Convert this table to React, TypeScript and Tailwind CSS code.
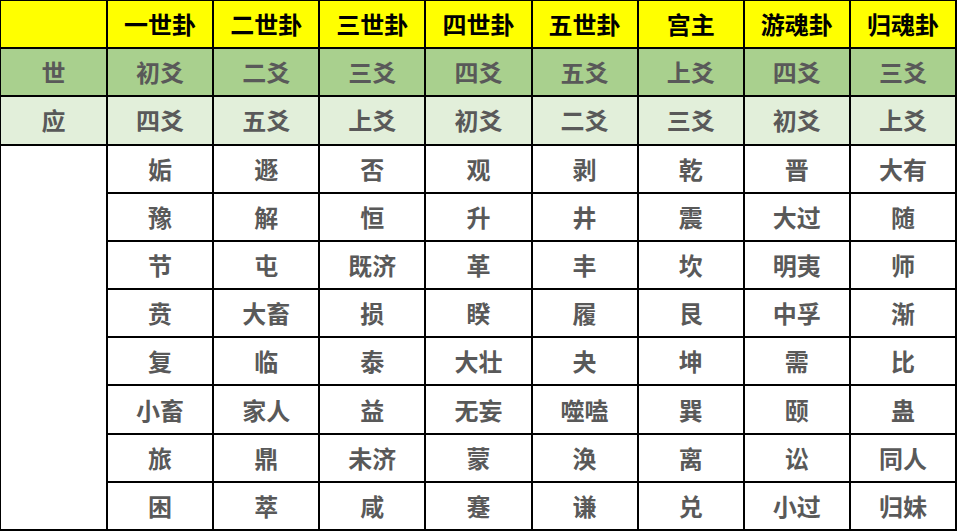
const headers = ["一世卦", "二世卦", "三世卦", "四世卦", "五世卦", "宫主", "游魂卦", "归魂卦"];
const shi = ["初爻", "二爻", "三爻", "四爻", "五爻", "上爻", "四爻", "三爻"];
const ying = ["四爻", "五爻", "上爻", "初爻", "二爻", "三爻", "初爻", "上爻"];
const body = [
  ["姤", "遯", "否", "观", "剥", "乾", "晋", "大有"],
  ["豫", "解", "恒", "升", "井", "震", "大过", "随"],
  ["节", "屯", "既济", "革", "丰", "坎", "明夷", "师"],
  ["贲", "大畜", "损", "睽", "履", "艮", "中孚", "渐"],
  ["复", "临", "泰", "大壮", "夬", "坤", "需", "比"],
  ["小畜", "家人", "益", "无妄", "噬嗑", "巽", "颐", "蛊"],
  ["旅", "鼎", "未济", "蒙", "涣", "离", "讼", "同人"],
  ["困", "萃", "咸", "蹇", "谦", "兑", "小过", "归妹"],
];

const cell = "flex items-center justify-center text-[24px] font-bold leading-none";

export default function App() {
  return (
    <div
      className="w-[960px] h-[532px] bg-white"
      style={{ fontFamily: '"Noto Sans CJK SC", "Noto Sans", sans-serif' }}
    >
      <div className="w-[957px] h-[531px] bg-black pl-[1px] pt-[1px] pr-[2px] pb-[2px] grid grid-cols-[105px_repeat(8,1fr)] grid-rows-[repeat(11,1fr)] gap-[2px]">
        <div className="bg-[#ffff00]" />
        {headers.map((h) => (
          <div key={h} className={`${cell} bg-[#ffff00] text-black`}>
            {h}
          </div>
        ))}
        <div className={`${cell} bg-[#a9d08e] text-[#595959]`}>世</div>
        {shi.map((t, i) => (
          <div key={i} className={`${cell} bg-[#a9d08e] text-[#595959]`}>
            {t}
          </div>
        ))}
        <div className={`${cell} bg-[#e2efda] text-[#595959]`}>应</div>
        {ying.map((t, i) => (
          <div key={i} className={`${cell} bg-[#e2efda] text-[#595959]`}>
            {t}
          </div>
        ))}
        <div className="bg-white row-span-8" />
        {body.map((row, r) =>
          row.map((t, c) => (
            <div key={`${r}-${c}`} className={`${cell} bg-white text-[#595959]`}>
              {t}
            </div>
          ))
        )}
      </div>
    </div>
  );
}
